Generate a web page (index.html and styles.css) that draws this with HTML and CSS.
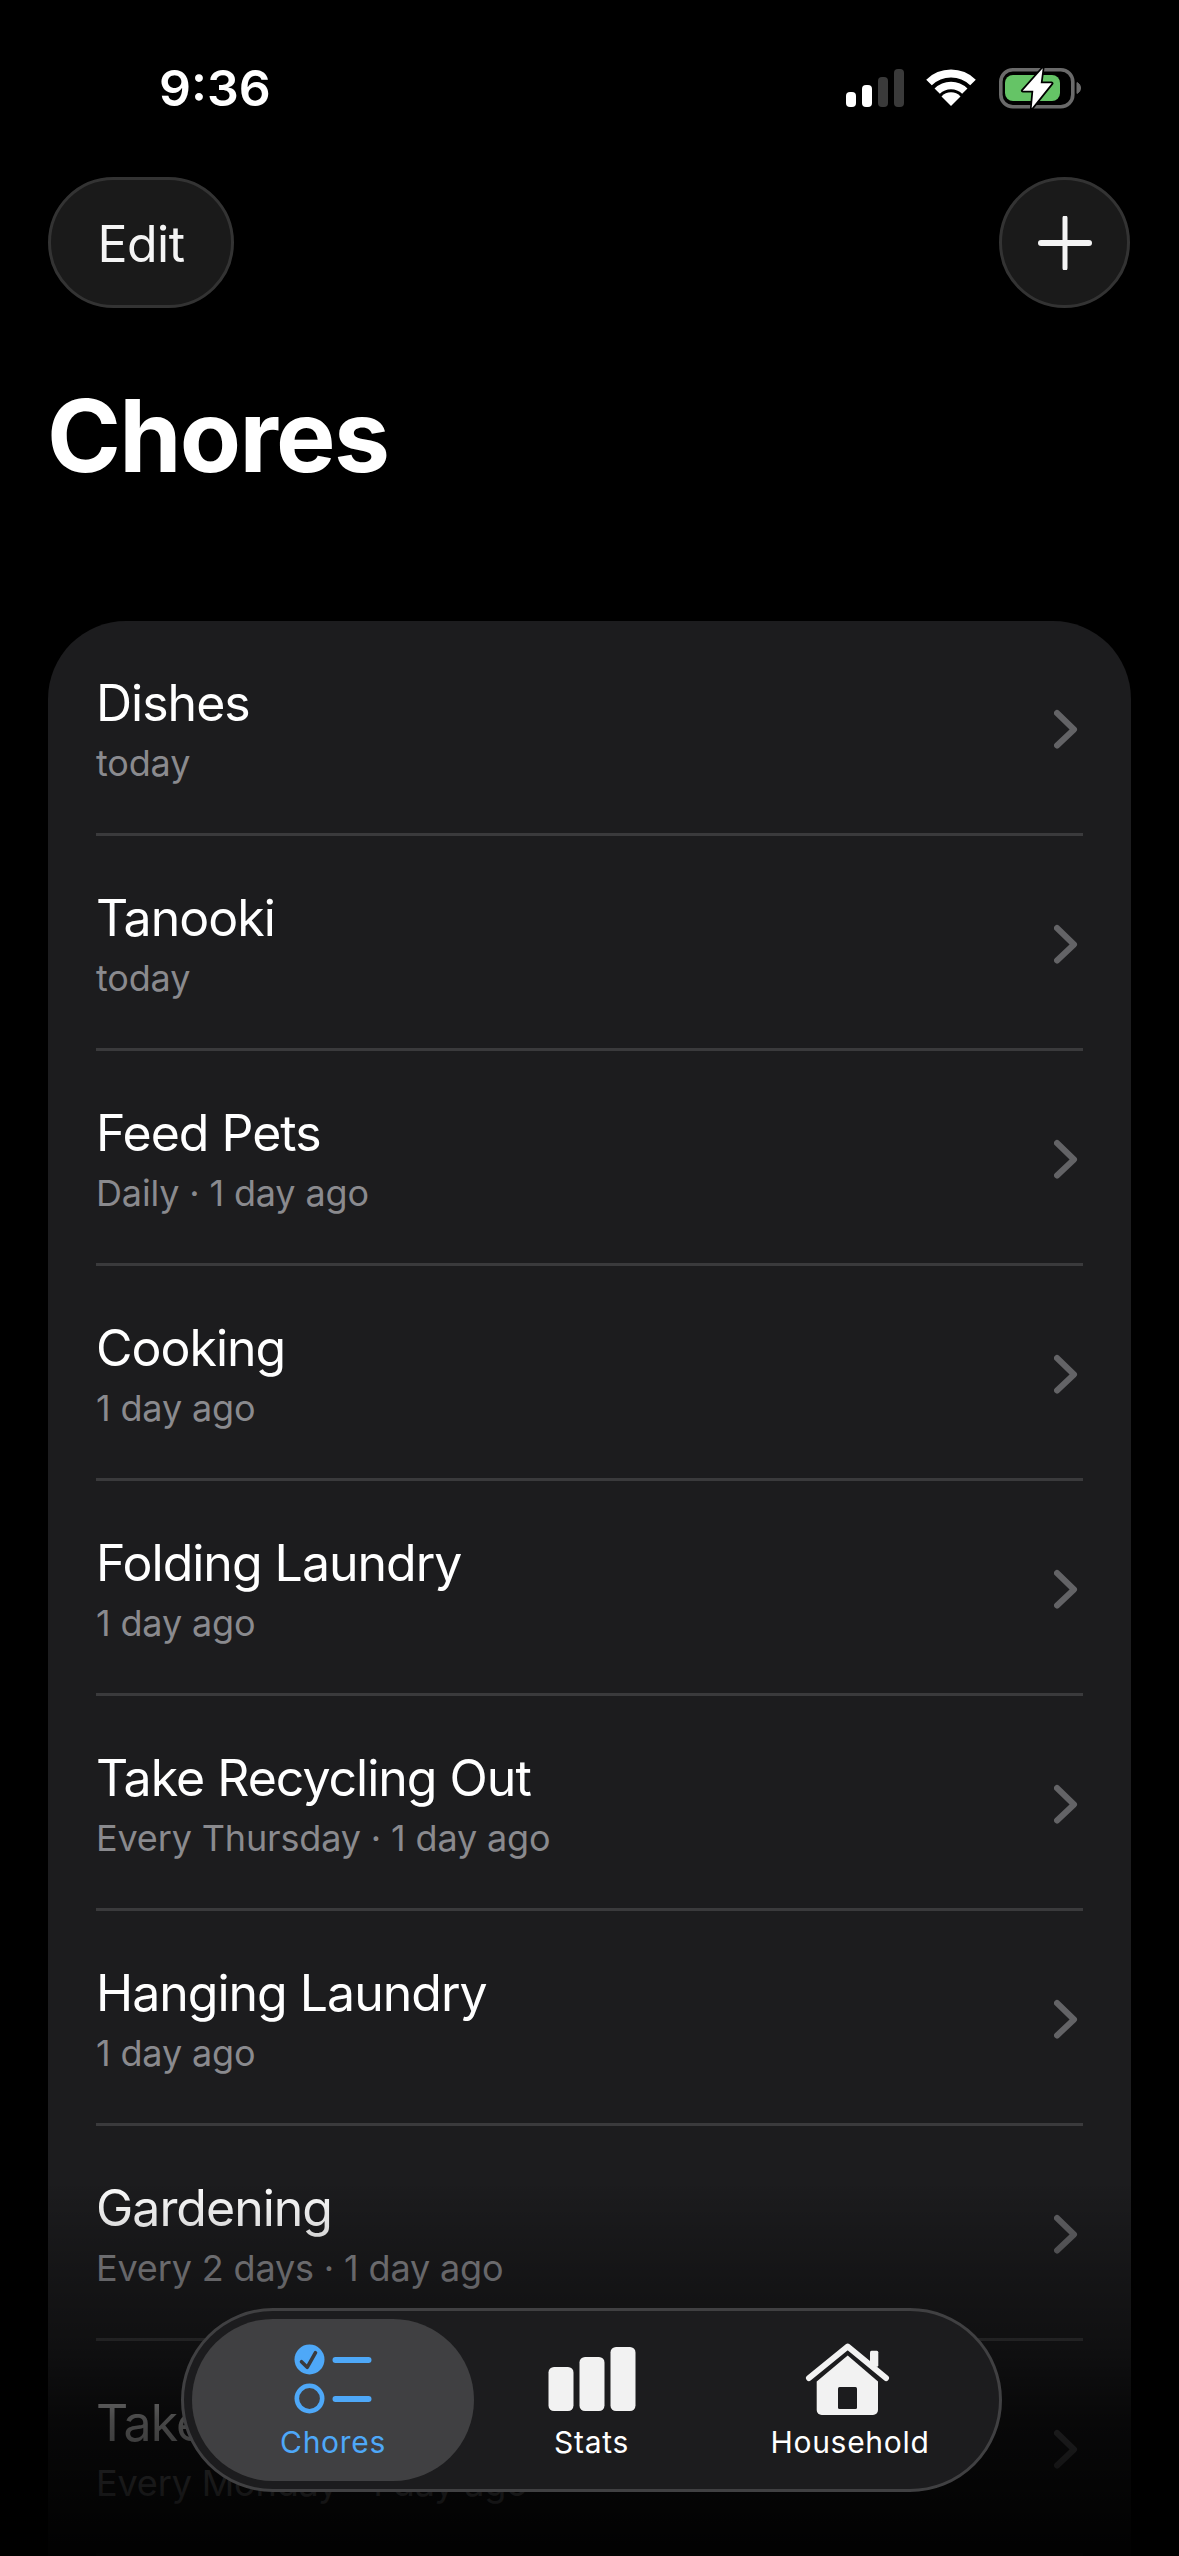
FILE: index.html
```html
<!DOCTYPE html>
<html lang="en">
<head>
    <meta charset="UTF-8">
    <meta name="viewport" content="width=device-width, initial-scale=1.0">
    <title>Chores</title>
    <link rel="stylesheet" href="styles.css">
</head>
<body>
    <div class="status">
        <span class="time">9:36</span>
        <div class="status-icons">
            <svg width="58" height="38" viewBox="0 0 58 38">
                <rect x="0" y="23" width="10" height="15" rx="4" fill="#fff"/>
                <rect x="16" y="16" width="10" height="22" rx="4" fill="#fff"/>
                <rect x="32" y="8" width="10" height="30" rx="4" fill="#3a3a3a"/>
                <rect x="48" y="0" width="10" height="38" rx="4" fill="#3a3a3a"/>
            </svg>
            <svg width="50" height="37" viewBox="0 0 50 37" fill="none" stroke="#fff">
                <path d="M3 13.5A31.5 31.5 0 0 1 47 13.5" stroke-width="8"/>
                <path d="M11.2 22.2A19.5 19.5 0 0 1 38.8 22.2" stroke-width="7.5"/>
                <path d="M25 37L15.5 27.5A13 13 0 0 1 34.5 27.5Z" fill="#fff" stroke="none"/>
            </svg>
            <svg width="84" height="42" viewBox="0 0 84 42">
                <rect x="2.8" y="2.8" width="72" height="37" rx="12" fill="none" stroke="#6a6a6a" stroke-width="3.6"/>
                <rect x="7" y="8" width="55" height="26" rx="8" fill="#65c466"/>
                <path d="M79 15.5a6 6 0 0 1 0 11Z" fill="#6a6a6a" stroke="#6a6a6a" stroke-width="1"/>
                <path d="M44.7 1.3L24.7 23.7H35.3L33.7 41.3L53.7 16.3H42.7Z" fill="#fff" stroke="#000" stroke-width="3.5" stroke-linejoin="round" paint-order="stroke"/>
            </svg>
        </div>
    </div>

    <div class="nav">
        <button class="nav-btn edit-btn">Edit</button>
        <button class="nav-btn add-btn">
            <svg width="54" height="54" viewBox="0 0 54 54" fill="none" stroke="#f4f4f4" stroke-linecap="round">
                <path d="M27 2V52" stroke-width="5"/>
                <path d="M3 27H51" stroke-width="6"/>
            </svg>
        </button>
    </div>

    <h1>Chores</h1>

    <div class="card">
        <div class="row">
            <div class="row-text"><div class="row-title">Dishes</div><div class="row-sub">today</div></div>
            <svg class="chevron" width="24" height="40" viewBox="0 0 24 40"><path d="M3 4L20 20.500L3 36.500"/></svg>
        </div>
        <div class="row">
            <div class="row-text"><div class="row-title">Tanooki</div><div class="row-sub">today</div></div>
            <svg class="chevron" width="24" height="40" viewBox="0 0 24 40"><path d="M3 4L20 20.500L3 36.500"/></svg>
        </div>
        <div class="row">
            <div class="row-text"><div class="row-title">Feed Pets</div><div class="row-sub">Daily · 1 day ago</div></div>
            <svg class="chevron" width="24" height="40" viewBox="0 0 24 40"><path d="M3 4L20 20.500L3 36.500"/></svg>
        </div>
        <div class="row">
            <div class="row-text"><div class="row-title">Cooking</div><div class="row-sub">1 day ago</div></div>
            <svg class="chevron" width="24" height="40" viewBox="0 0 24 40"><path d="M3 4L20 20.500L3 36.500"/></svg>
        </div>
        <div class="row">
            <div class="row-text"><div class="row-title">Folding Laundry</div><div class="row-sub">1 day ago</div></div>
            <svg class="chevron" width="24" height="40" viewBox="0 0 24 40"><path d="M3 4L20 20.500L3 36.500"/></svg>
        </div>
        <div class="row">
            <div class="row-text"><div class="row-title">Take Recycling Out</div><div class="row-sub">Every Thursday · 1 day ago</div></div>
            <svg class="chevron" width="24" height="40" viewBox="0 0 24 40"><path d="M3 4L20 20.500L3 36.500"/></svg>
        </div>
        <div class="row">
            <div class="row-text"><div class="row-title">Hanging Laundry</div><div class="row-sub">1 day ago</div></div>
            <svg class="chevron" width="24" height="40" viewBox="0 0 24 40"><path d="M3 4L20 20.500L3 36.500"/></svg>
        </div>
        <div class="row">
            <div class="row-text"><div class="row-title">Gardening</div><div class="row-sub">Every 2 days · 1 day ago</div></div>
            <svg class="chevron" width="24" height="40" viewBox="0 0 24 40"><path d="M3 4L20 20.500L3 36.500"/></svg>
        </div>
        <div class="row">
            <div class="row-text"><div class="row-title">Take Out Bins</div><div class="row-sub">Every Monday · 1 day ago</div></div>
            <svg class="chevron" width="24" height="40" viewBox="0 0 24 40"><path d="M3 4L20 20.500L3 36.500"/></svg>
        </div>
    </div>

    <div class="fade"></div>

    <div class="tabbar">
        <div class="tab tab-chores">
            <svg width="100" height="74" viewBox="0 0 100 74">
                <circle cx="26.500" cy="17.500" r="15" fill="#4ea8f8"/>
                <path d="M18.500 19.700L24.200 25.300L32.500 10.700" fill="none" stroke="#3a3a3c" stroke-width="3.600" stroke-linecap="round" stroke-linejoin="round"/>
                <path d="M52.500 18H85.500M52.500 57H85.500" stroke="#4ea8f8" stroke-width="6" stroke-linecap="round"/>
                <circle cx="26.500" cy="56.500" r="12.700" fill="none" stroke="#4ea8f8" stroke-width="4.600"/>
            </svg>
            <span class="tab-label">Chores</span>
        </div>
        <div class="tab tab-stats">
            <svg width="100" height="74" viewBox="0 0 100 74" fill="#f2f2f2">
                <rect x="6.500" y="25" width="25" height="44" rx="5.500"/>
                <rect x="37.500" y="15" width="25" height="54" rx="5.500"/>
                <rect x="68.500" y="5" width="25" height="64" rx="5.500"/>
            </svg>
            <span class="tab-label">Stats</span>
        </div>
        <div class="tab tab-house">
            <svg width="100" height="74" viewBox="0 0 100 74" fill="#f2f2f2">
                <rect x="70" y="8.700" width="8.300" height="16" rx="1.500"/>
                <path d="M47.700 13.500L16.700 39.500V68a5 5 0 0 0 5 5H73a5 5 0 0 0 5-5V39.500Z"/>
                <rect x="38" y="45" width="19" height="22" rx="1.500" fill="#1c1c1e"/>
                <path d="M9 36L47.700 4.500L86 36" fill="none" stroke="#f2f2f2" stroke-width="6" stroke-linecap="round" stroke-linejoin="round"/>
            </svg>
            <span class="tab-label">Household</span>
        </div>
    </div>
</body>
</html>
```

FILE: styles.css
```css
* {
    box-sizing: border-box;
}
html, body {
    margin: 0;
    padding: 0;
}
body {
    position: relative;
    width: 1179px;
    height: 2556px;
    overflow: hidden;
    background-color: #000;
    color: #fff;
    font-family: Inter, "Liberation Sans", sans-serif;
}
.status {
    height: 177px;
    padding: 0 97px 2px 159px;
    display: flex;
    align-items: center;
    justify-content: space-between;
}
.time {
    font-size: 50px;
    font-weight: 600;
    line-height: 60px;
}
.status-icons {
    display: flex;
    align-items: center;
    gap: 22px;
}
.nav {
    display: flex;
    justify-content: space-between;
    padding: 0 49px 0 48px;
}
.nav-btn {
    height: 131px;
    padding: 0;
    display: flex;
    align-items: center;
    justify-content: center;
    background: #1a1a1a;
    border: 3px solid #333;
    border-radius: 66px;
    color: #f4f4f4;
    font-family: inherit;
    font-size: 50px;
}
.edit-btn {
    width: 186px;
    padding-top: 2px;
    letter-spacing: -0.5px;
}
.add-btn {
    width: 131px;
}
h1 {
    margin: 0;
    padding: 65px 0 122px 47px;
    font-size: 100px;
    font-weight: 700;
    line-height: 126px;
    letter-spacing: -1.7px;
}
.card {
    margin: 0 48px;
    height: 1935px;
    background: #1c1c1e;
    border-radius: 78px 78px 0 0;
}
.row {
    height: 215px;
    margin: 0 48px;
    padding: 3px 5px 0 0;
    display: flex;
    align-items: center;
    justify-content: space-between;
    border-bottom: 3px solid #3a3a3c;
}
.row-text {
    margin-top: 4px;
}
.row-title {
    font-size: 50px;
    line-height: 60px;
    letter-spacing: -1px;
}
.row-sub {
    margin-top: 5px;
    color: #8a8a8e;
    font-size: 36px;
    line-height: 50px;
    letter-spacing: -0.15px;
}
.chevron {
    fill: none;
    stroke: #636366;
    stroke-width: 6;
    stroke-linecap: round;
    stroke-linejoin: round;
}
.fade {
    position: absolute;
    left: 0;
    right: 0;
    bottom: 0;
    height: 376px;
    background: linear-gradient(to bottom, rgba(0, 0, 0, 0) 0%, rgba(0, 0, 0, 0.25) 24%, rgba(0, 0, 0, 0.42) 43%, rgba(0, 0, 0, 0.72) 64%, rgba(0, 0, 0, 0.82) 80%, rgba(0, 0, 0, 0.95) 100%);
}
.tabbar {
    position: absolute;
    left: 181px;
    bottom: 64px;
    width: 821px;
    height: 184px;
    padding: 8px;
    display: flex;
    background: #1c1c1e;
    border: 3px solid #404042;
    border-radius: 92px;
}
.tab {
    height: 162px;
    padding-top: 23px;
    display: flex;
    flex-direction: column;
    align-items: center;
}
.tab-chores {
    width: 282px;
    background: #404042;
    border-radius: 81px;
    color: #4ea8f8;
}
.tab-stats {
    width: 235px;
}
.tab-house {
    width: 282px;
}
.tab-label {
    margin-top: 8px;
    font-size: 30px;
    font-weight: 400;
    line-height: 36px;
    letter-spacing: 0.7px;
}
```
